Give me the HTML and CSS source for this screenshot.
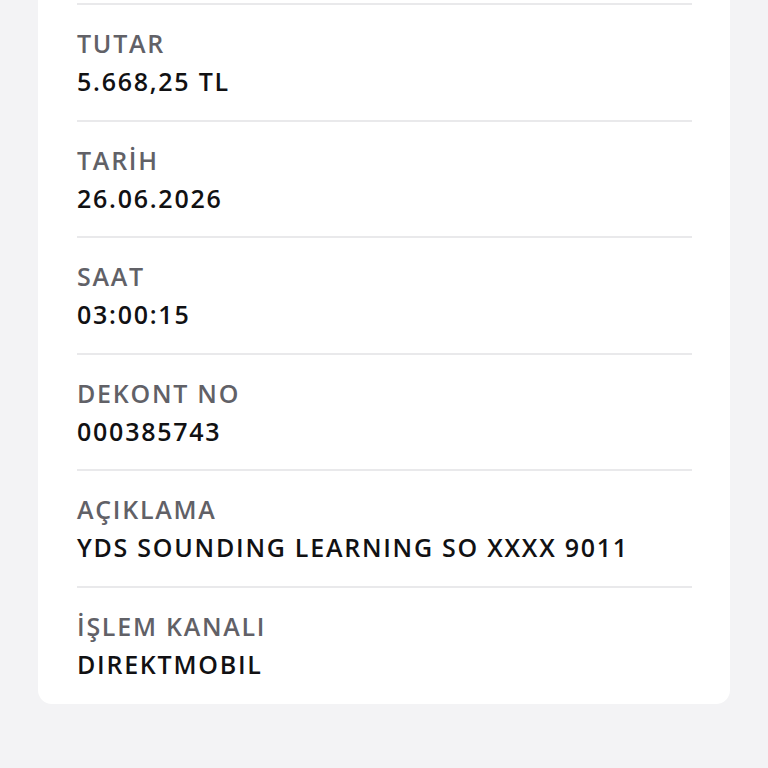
FILE: index.html
```html
<!DOCTYPE html>
<html lang="tr">
<head>
<meta charset="utf-8">
<link rel="stylesheet" href="styles.css">
</head>
<body>
<main class="page">
  <section class="card">
    <div class="row">
      <div class="label">TUTAR</div>
      <div class="value">5.668,25 TL</div>
    </div>
    <div class="row">
      <div class="label">TARİH</div>
      <div class="value">26.06.2026</div>
    </div>
    <div class="row">
      <div class="label">SAAT</div>
      <div class="value">03:00:15</div>
    </div>
    <div class="row">
      <div class="label">DEKONT NO</div>
      <div class="value">000385743</div>
    </div>
    <div class="row">
      <div class="label">AÇIKLAMA</div>
      <div class="value">YDS SOUNDING LEARNING SO XXXX 9011</div>
    </div>
    <div class="row last">
      <div class="label">İŞLEM KANALI</div>
      <div class="value">DIREKTMOBIL</div>
    </div>
  </section>
</main>
</body>
</html>
```
FILE: styles.css
```css
html, body {
  margin: 0;
  padding: 0;
  background: #f3f3f5;
}
.page {
  padding: 0 38px 0 38px;
  height: 768px;
  overflow: hidden;
}
.card {
  background: #ffffff;
  border-radius: 0 0 14px 14px;
  margin-top: -17px;
  padding: 20px 38px 0 39px;
  font-family: "Open Sans", "Noto Sans", sans-serif;
  font-size: 25px;
  letter-spacing: 1.75px;
}
.row {
  border-top: 2px solid #e9e9eb;
  padding: 19px 0 19.5px;
}
.row.last {
  padding-bottom: 21px;
}
.label {
  line-height: 38px;
  color: #616167;
  font-weight: 600;
}
.value {
  line-height: 38px;
  color: #111113;
  font-weight: 600;
}
```
